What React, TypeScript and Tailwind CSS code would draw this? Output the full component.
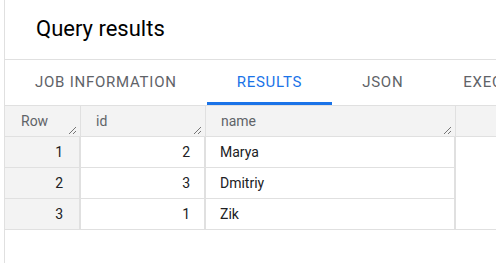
import React from "react";

const rows = [
  { row: 1, id: 2, name: "Marya" },
  { row: 2, id: 3, name: "Dmitriy" },
  { row: 3, id: 1, name: "Zik" },
];

const tabs = ["Job information", "Results", "JSON", "Execution details"];

function Grip() {
  return (
    <svg
      width="9"
      height="9"
      viewBox="0 0 9 9"
      className="absolute right-[3px] bottom-[1px]"
    >
      <path d="M1 8 L8 1 M5 8 L8 5" stroke="#757575" strokeWidth="1" />
    </svg>
  );
}

export default function App() {
  return (
    <div
      className="w-[496px] h-[263px] overflow-hidden bg-white text-[#202124]"
      style={{ fontFamily: "Roboto, 'Liberation Sans', sans-serif" }}
    >
      <div className="ml-[4px] h-full border-l border-[#e0e0e0] flex flex-col">
        {/* Title */}
        <div className="h-[60px] shrink-0 flex items-center pl-[31px] pb-[2px] border-b border-[#e0e0e0]">
          <h1 className="text-[22px] leading-none text-black">Query results</h1>
        </div>

        {/* Tabs */}
        <div className="h-[45px] shrink-0 flex whitespace-nowrap">
          {tabs.map((t, i) => (
            <div
              key={t}
              className={`px-[30px] pt-[2px] flex items-center uppercase text-[15px] tracking-[0.75px] border-b-[3px] ${
                i === 1
                  ? "text-[#1a73e8] border-[#1a73e8]"
                  : "text-[#5f6368] border-transparent"
              }`}
            >
              {t}
            </div>
          ))}
        </div>

        {/* Table */}
        <div className="flex flex-col text-[14px]">
          <div className="h-[32px] flex bg-[#f3f3f3] border-y border-[#e0e0e0] text-[#5f6368]">
            <div className="relative w-[76px] pl-[16px] flex items-center border-r border-[#e0e0e0]">
              Row
              <Grip />
            </div>
            <div className="relative w-[125px] pl-[15px] flex items-center border-r border-[#e0e0e0]">
              id
              <Grip />
            </div>
            <div className="relative w-[250px] pl-[15px] flex items-center border-r border-[#e0e0e0]">
              name
              <Grip />
            </div>
            <div className="flex-1" />
          </div>

          <div className="flex">
            <div className="flex flex-col">
              {rows.map((r) => (
                <div key={r.row} className="h-[31px] flex border-b border-[#e0e0e0]">
                  <div className="w-[76px] bg-[#f3f3f3] pr-[16px] flex items-center justify-end border-r-2 border-[#e0e0e0]">
                    {r.row}
                  </div>
                  <div className="w-[125px] pr-[14px] flex items-center justify-end border-r-2 border-[#e0e0e0]">
                    {r.id}
                  </div>
                  <div className="w-[250px] pl-[14px] flex items-center border-r-2 border-[#e0e0e0]">
                    {r.name}
                  </div>
                </div>
              ))}
            </div>
            <div className="flex-1 border-b border-[#e0e0e0]" />
          </div>
        </div>
      </div>
    </div>
  );
}
